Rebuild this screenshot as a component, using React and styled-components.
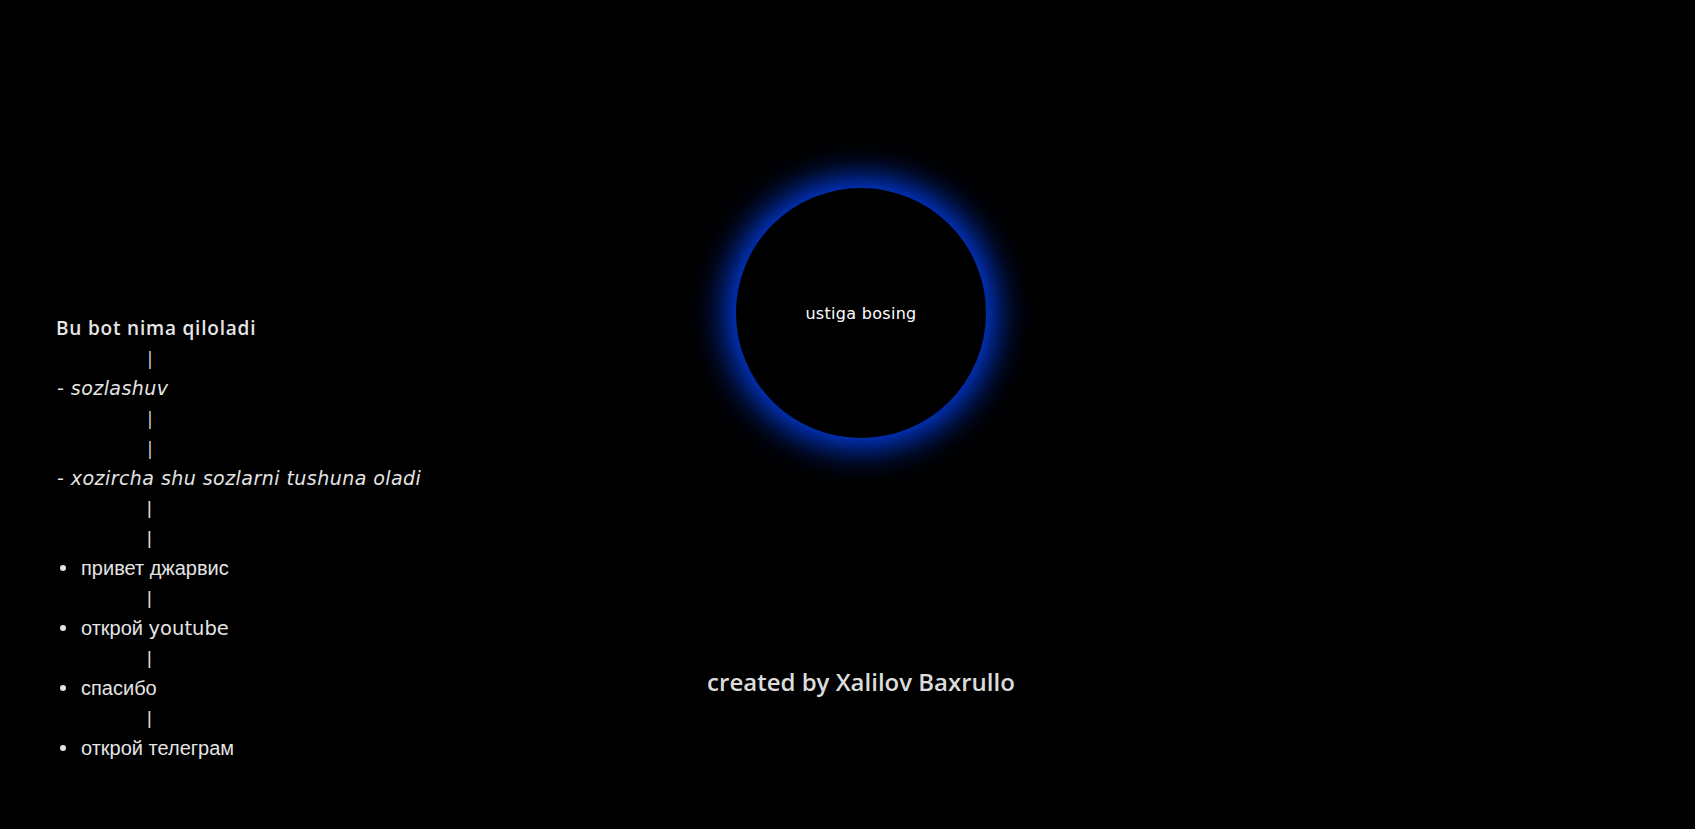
import React from "react";
import styled, { createGlobalStyle } from "styled-components";

const GlobalStyle = createGlobalStyle`
    html, body {
        margin: 0;
        padding: 0;
        background: #000;
    }
    body {
        font-family: "Open Sans", "Liberation Sans", sans-serif;
        color: #e4e4e4;
    }
`;

const Page = styled.div`
    display: grid;
    grid-template-columns: minmax(0, 1fr) auto minmax(0, 1fr);
    height: 100vh;
    overflow: hidden;
`;

const Sidebar = styled.div`
    display: flex;
    flex-direction: column;
    justify-content: flex-end;
    padding: 0 0 66px 56px;
`;

const Line = styled.div`
    height: 30px;
    line-height: 30px;
    font-size: 18px;
    white-space: nowrap;
`;

const Heading = styled(Line)`
    font-size: 19px;
    font-weight: 600;
    letter-spacing: 0.8px;
    color: #e6e6e6;
`;

const Note = styled(Line)`
    font-family: "DejaVu Sans", sans-serif;
    font-style: italic;
    font-size: 19px;
    letter-spacing: 0.45px;
    padding-left: 1px;
`;

const Connector = styled(Line)`
    padding-left: ${props => props.latin ? "89px" : "91px"};
    font-family: ${props => props.latin ? '"Open Sans", sans-serif' : '"Liberation Sans", sans-serif'};
`;

const Command = styled(Line)`
    position: relative;
    padding-left: 25px;
    font-family: "Liberation Sans", Arial, sans-serif;
    font-size: 20px;

    &::before {
        content: "";
        position: absolute;
        left: 4px;
        top: 12px;
        width: 6px;
        height: 6px;
        border-radius: 50%;
        background: #e4e4e4;
    }
`;

const Latin = styled.span`
    font-family: "DejaVu Sans", sans-serif;
    font-size: 19.5px;
`;

const Stage = styled.div`
    display: flex;
    flex-direction: column;
    align-items: center;
    padding: 188px 0 0 27px;
`;

const Orb = styled.button`
    width: 250px;
    height: 250px;
    border-radius: 50%;
    border: none;
    background: #000;
    color: #fff;
    font-family: "DejaVu Sans", sans-serif;
    font-size: 16px;
    letter-spacing: 0.3px;
    cursor: pointer;
    box-shadow: 0 0 34px 10px #0040f0;
`;

const Credit = styled.h3`
    margin: 226px 0 0;
    font-size: 24px;
    line-height: 36px;
    font-weight: 600;
    color: #dcdcdc;
    white-space: nowrap;
`;

const commands = ["привет джарвис", "открой youtube", "спасибо", "открой телеграм"];

function App() {
    return (
        <>
            <GlobalStyle />
            <Page>
                <Sidebar>
                    <Heading>Bu bot nima qiloladi</Heading>
                    <Connector latin>|</Connector>
                    <Note>- sozlashuv</Note>
                    <Connector latin>|</Connector>
                    <Connector latin>|</Connector>
                    <Note>- xozircha shu sozlarni tushuna oladi</Note>
                    <Connector>|</Connector>
                    <Connector>|</Connector>
                    {commands.map((c, i) => (
                        <React.Fragment key={c}>
                            {i > 0 && <Connector>|</Connector>}
                            <Command>
                                {c.includes("youtube")
                                    ? <>открой <Latin>youtube</Latin></>
                                    : c}
                            </Command>
                        </React.Fragment>
                    ))}
                </Sidebar>
                <Stage>
                    <Orb>ustiga bosing</Orb>
                    <Credit>created by Xalilov Baxrullo</Credit>
                </Stage>
                <div />
            </Page>
        </>
    );
}

export default App;
